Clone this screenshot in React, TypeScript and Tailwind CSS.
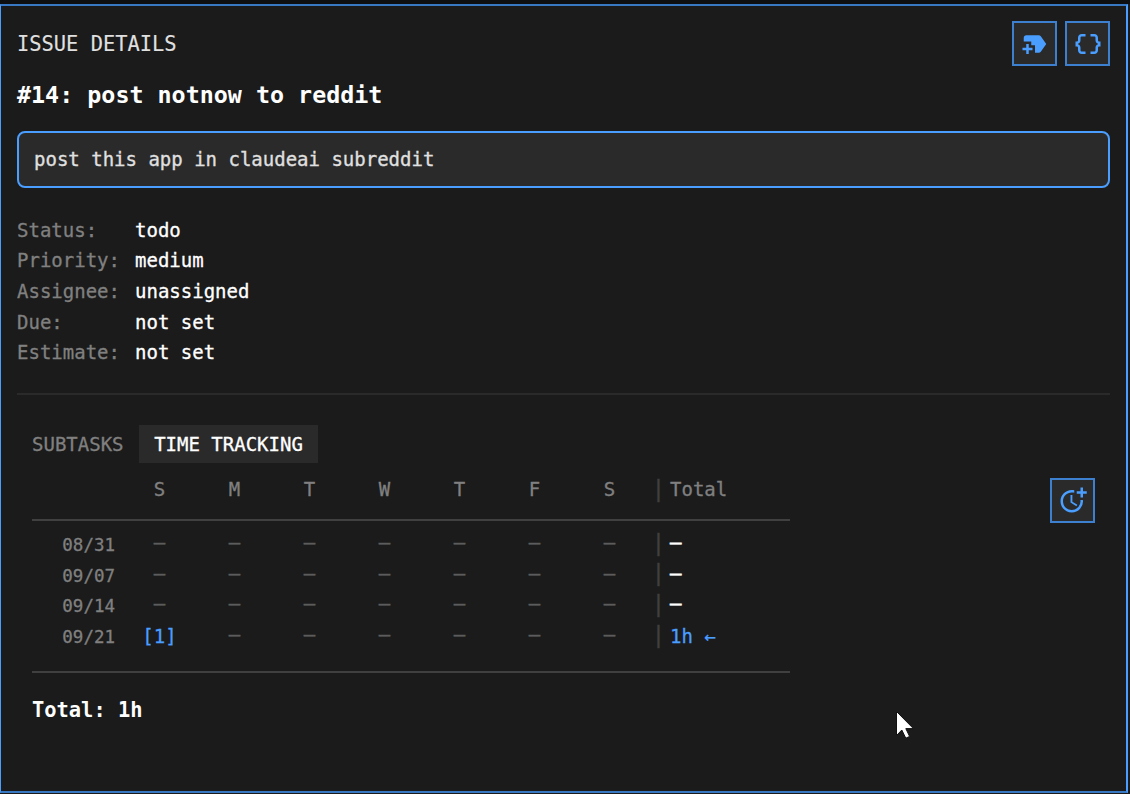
import { MdDataObject, MdMoreTime, MdNewLabel } from "react-icons/md";
import type { ReactNode } from "react";

const details = [
  { label: "Status:", value: "todo" },
  { label: "Priority:", value: "medium" },
  { label: "Assignee:", value: "unassigned" },
  { label: "Due:", value: "not set" },
  { label: "Estimate:", value: "not set" },
];

const days = ["S", "M", "T", "W", "T", "F", "S"];

const weeks = [
  { date: "08/31", first: "–", total: "–", current: false },
  { date: "09/07", first: "–", total: "–", current: false },
  { date: "09/14", first: "–", total: "–", current: false },
  { date: "09/21", first: "[1]", total: "1h ←", current: true },
];

function IconButton({ label, children }: { label: string; children: ReactNode }) {
  return (
    <button
      aria-label={label}
      className="flex size-[45px] shrink-0 items-center justify-center border-2 border-[#3d80d0] bg-[#2a2a2a] pl-px text-[#4a9eff]"
    >
      {children}
    </button>
  );
}

function Bar() {
  return <span className="w-[23px] shrink-0 text-center text-[23px] leading-none text-[#404040]">|</span>;
}

export default function App() {
  return (
    <div className="flex h-screen w-full flex-col overflow-hidden bg-[#1b1b1b] font-['DejaVu_Sans_Mono',monospace] text-[19px] leading-none [-webkit-text-stroke:0.3px]">
      <div className="h-1 shrink-0 bg-[#0e0f11]" />
      <div className="mr-0.5 flex h-[789px] shrink-0 flex-col border-y-2 border-r-2 border-l border-y-[#3878c2] border-r-[#4a9eff] border-l-[#4a9eff] pr-4 pl-4">
        <header className="mt-[15px] flex h-[46px] items-start justify-between">
          <h2 className="pt-[13px] text-[20.4px] text-[#e0e0e0] [-webkit-text-stroke:0.1px]">ISSUE DETAILS</h2>
          <div className="flex gap-2">
            <IconButton label="Add label">
              <MdNewLabel size={30} strokeWidth={0} />
            </IconButton>
            <IconButton label="View JSON">
              <MdDataObject size={30} />
            </IconButton>
          </div>
        </header>

        <h1 className="mt-[11px] flex h-9 items-center text-[23.35px] font-bold text-white [-webkit-text-stroke:0px]">
          #14: post notnow to reddit
        </h1>

        <div className="mt-[17px] flex h-[57px] shrink-0 items-center rounded-lg border-2 border-[#4a9eff] bg-[#2a2a2a] px-[15px] text-[#e0e0e0]">
          post this app in claudeai subreddit
        </div>

        <dl className="mt-[27px] flex flex-col">
          {details.map((d) => (
            <div key={d.label} className="flex h-[30.6px] items-center">
              <dt className="w-[118px] text-[#808080]">{d.label}</dt>
              <dd className="text-white">{d.value}</dd>
            </div>
          ))}
        </dl>

        <hr className="mt-[25px] border-t-2 border-[#2a2a2a]" />

        <nav className="mt-[30px] flex h-[38px] shrink-0 items-stretch pl-[15px]">
          <button className="mr-[15px] w-[92px] pt-0.5 whitespace-nowrap text-left text-[#808080]">SUBTASKS</button>
          <button className="w-[179px] bg-[#2a2a2a] pt-0.5 whitespace-nowrap text-white">TIME TRACKING</button>
        </nav>

        <section className="flex items-start justify-between px-[15px] pt-[15px]">
          <div className="w-[758px]">
            <div className="flex h-[43px] items-start border-b-2 border-[#404040] text-[#808080]">
              <span className="w-[90px]" />
              {days.map((day, i) => (
                <span key={i} className="flex h-[23px] w-[75px] items-center justify-center">
                  {day}
                </span>
              ))}
              <Bar />
              <span className="flex h-[23px] items-center">Total</span>
            </div>
            <div className="flex h-[152px] flex-col border-b-2 border-[#404040] pt-[8px]">
              {weeks.map((w) => (
                <div key={w.date} className="flex h-[30.6px] items-center">
                  <span className="w-[90px] pt-[3px] pr-[7px] text-right text-[17.5px] text-[#808080]">{w.date}</span>
                  {days.map((_, i) => (
                    <span
                      key={i}
                      className={
                        i === 0 && w.current
                          ? "w-[75px] text-center text-[#4a9eff]"
                          : "w-[75px] pb-[3px] text-center text-[#5c5c5c] [-webkit-text-stroke:0.5px]"
                      }
                    >
                      {i === 0 ? w.first : "–"}
                    </span>
                  ))}
                  <span className="flex pb-0.5">
                    <Bar />
                  </span>
                  <span
                    className={
                      w.current
                        ? "text-[#4a9eff]"
                        : "pb-[3px] text-white [-webkit-text-stroke:0.7px]"
                    }
                  >
                    {w.total}
                  </span>
                </div>
              ))}
            </div>
            <p className="mt-[22px] flex h-[30px] items-center text-[20.4px] font-bold text-white [-webkit-text-stroke:0px]">
              Total: 1h
            </p>
          </div>
          <IconButton label="Log time">
            <MdMoreTime size={30} />
          </IconButton>
        </section>
      </div>
      <svg className="absolute top-[710px] left-[895px]" width="20" height="29" viewBox="0 0 20 29">
        <path d="M1.5 1.5V25.5L6.8 20l4 8.2 3.8-1.8-3.8-7.8h7.6z" fill="#fff" stroke="#111" strokeWidth="1" />
      </svg>
    </div>
  );
}
